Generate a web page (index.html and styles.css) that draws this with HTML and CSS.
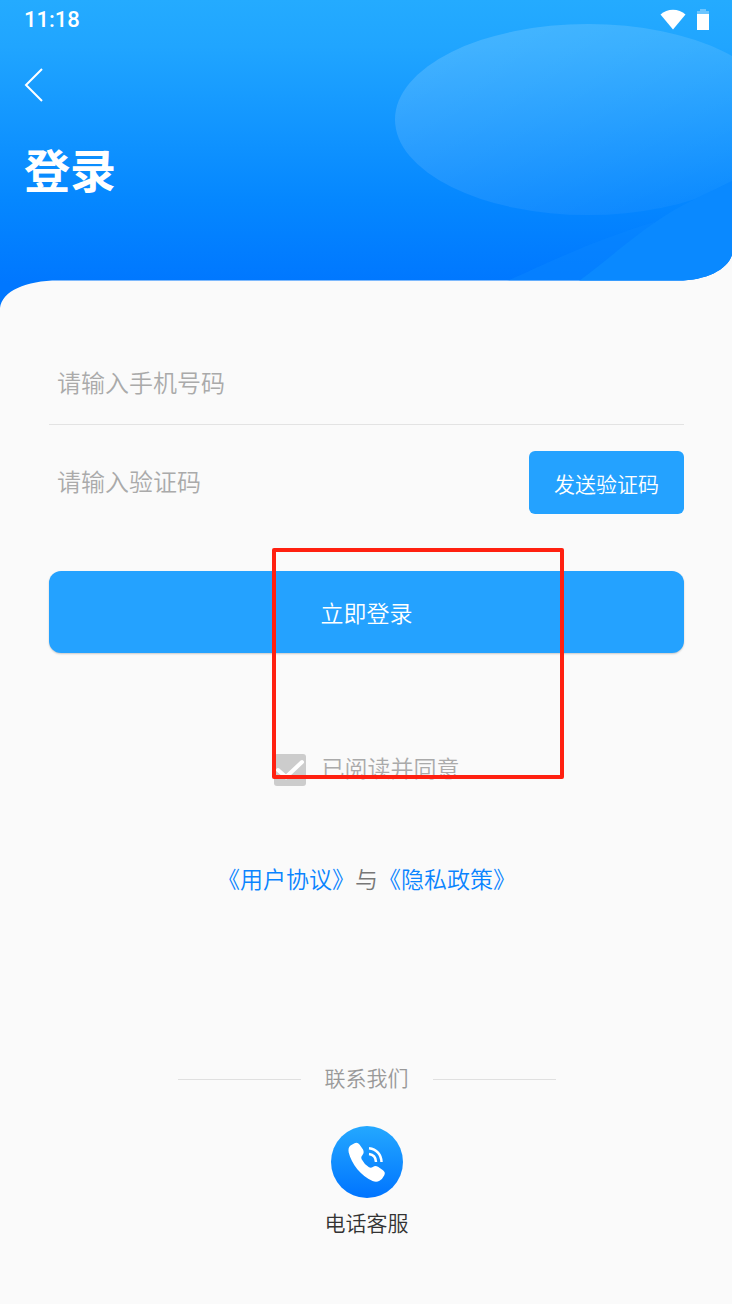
FILE: index.html
```html
<!DOCTYPE html>
<html lang="zh-CN">
<head>
    <meta charset="UTF-8">
    <meta name="viewport" content="width=device-width, initial-scale=1.0">
    <title>登录</title>
    <link rel="stylesheet" href="styles.css">
</head>
<body>
    <header class="header">
        <svg class="header-bg" viewBox="0 0 732 308" preserveAspectRatio="none" aria-hidden="true">
            <defs>
                <linearGradient id="sky" x1="0" y1="0" x2="0" y2="1">
                    <stop offset="0" stop-color="#24abff"/>
                    <stop offset="0.15" stop-color="#20a5ff"/>
                    <stop offset="0.65" stop-color="#0587ff"/>
                    <stop offset="0.92" stop-color="#0077ff"/>
                    <stop offset="1" stop-color="#0077ff"/>
                </linearGradient>
                <linearGradient id="shine" x1="0.1" y1="0.2" x2="0.75" y2="1">
                    <stop offset="0" stop-color="#fff" stop-opacity="0.15"/>
                    <stop offset="1" stop-color="#fff" stop-opacity="0.03"/>
                </linearGradient>
                <clipPath id="shape">
                    <path d="M0 0H732V255C727 270 706 280.500 678 280.500H58C26 280.500 2 291 0 308Z"/>
                </clipPath>
            </defs>
            <g clip-path="url(#shape)">
                <rect width="732" height="308" fill="url(#sky)"/>
                <ellipse cx="588" cy="119.500" rx="193" ry="95.500" fill="url(#shine)"/>
                <path d="M507 281C545 264 592 241 654 222L700 281Z" fill="#0a87ff" fill-opacity="0.45"/>
                <path d="M579 281C610 258 636 234 663 217C686 202 710 192 732 181V281Z" fill="#0a89ff"/>
            </g>
        </svg>
        <div class="status-bar">
            <span class="time">11:18</span>
            <span class="status-icons">
                <svg width="26" height="21" viewBox="0 0 26 21" aria-hidden="true">
                    <path d="M0.500 5.500C7-1 19-1 25.500 5.500L13 20.500Z" fill="#fff"/>
                </svg>
                <svg width="12" height="21" viewBox="0 0 12 21" aria-hidden="true">
                    <path d="M3 0H9V2H12V6H0V2H3Z" fill="#6cc5ff"/>
                    <path d="M0 5H12V21H0Z" fill="#fff"/>
                </svg>
            </span>
        </div>
        <button class="back" type="button" aria-label="返回">
            <svg width="20" height="34" viewBox="0 0 20 34" aria-hidden="true">
                <path d="M18 1L2 17L18 33" fill="none" stroke="#fff" stroke-width="2"/>
            </svg>
        </button>
        <h1 class="title">登录</h1>
    </header>

    <main class="content">
        <form class="login-form">
            <input class="field phone" type="tel" placeholder="请输入手机号码" aria-label="手机号码">
            <div class="code-row">
                <input class="field" type="text" placeholder="请输入验证码" aria-label="验证码">
                <button class="send" type="button">发送验证码</button>
            </div>
            <button class="submit" type="button">立即登录</button>
            <div class="agree">
                <input type="checkbox" id="agree" checked>
                <label for="agree">已阅读并同意</label>
            </div>
            <p class="terms"><a href="#">《用户协议》</a>与<a href="#">《隐私政策》</a></p>
            <div class="highlight"></div>
        </form>

        <section class="contact">
            <h2 class="contact-title">联系我们</h2>
            <a class="service" href="#">
                <svg width="72" height="72" viewBox="0 0 72 72" aria-hidden="true">
                    <defs>
                        <linearGradient id="call" x1="0" y1="0" x2="0" y2="1">
                            <stop offset="0" stop-color="#24a8ff"/>
                            <stop offset="1" stop-color="#0074ff"/>
                        </linearGradient>
                    </defs>
                    <circle cx="36" cy="36" r="36" fill="url(#call)"/>
                    <path d="M19.500 19.500L23.500 17.200Q26.500 15.800 28.500 18.500L32 23.500Q33.500 26.500 31.500 29Q29.500 31 30.500 33Q33 38 38 41.300Q40 42.300 41.800 41Q44.200 39 47 40.700L52 44.300Q54.800 46.500 53.300 49.200Q51.500 53 48.500 54.800Q45.500 56.600 41.500 55C30 50 20.500 38 17.700 26.500Q16.800 21.500 19.500 19.500Z" fill="#fff"/>
                    <path d="M38 22.200C45.500 23 50.300 28.500 50.500 36M38 28C42.500 28.500 44.800 31.500 45 36" fill="none" stroke="#fff" stroke-width="2.500"/>
                </svg>
                <span>电话客服</span>
            </a>
        </section>
    </main>
</body>
</html>
```
FILE: styles.css
```css
* {
    box-sizing: border-box;
}

body {
    margin: 0;
    background-color: #fafafa;
    color: #777;
    font-family: Roboto, "Noto Sans CJK SC", sans-serif;
    font-size: 23px;
    font-weight: 350;
    line-height: 32px;
}

a {
    color: #0a84ff;
    text-decoration: none;
}

button,
input {
    margin: 0;
    padding: 0;
    border: none;
    font-family: inherit;
    font-weight: inherit;
}

button {
    color: #fff;
    cursor: pointer;
}

.header {
    position: relative;
    height: 308px;
    padding: 0 23px 0 24px;
    color: #fff;
}

.header-bg {
    position: absolute;
    top: 0;
    left: 0;
    z-index: -1;
    width: 100%;
    height: 100%;
}

.status-bar {
    display: flex;
    align-items: center;
    justify-content: space-between;
    height: 40px;
}

.time {
    font-size: 22px;
    font-weight: 500;
}

.status-icons {
    display: flex;
    gap: 11px;
    padding-bottom: 2px;
}

.back {
    display: flex;
    margin-top: 28px;
    background: none;
}

.title {
    margin: 36px 0 0;
    font-size: 46px;
    font-weight: bold;
    line-height: 68px;
}

.content {
    padding: 36px 48px 64px 49px;
}

.login-form {
    position: relative;
}

.field {
    display: block;
    width: 100%;
    min-width: 0;
    padding: 0 8px;
    background: none;
    color: #333;
    font-size: 24px;
    outline: none;
}

.field::placeholder {
    color: #aaa;
}

.phone {
    height: 81px;
    border-bottom: 1px solid #e3e3e3;
}

.code-row {
    display: flex;
    margin-top: 26px;
}

.send {
    flex: none;
    padding: 0 25px;
    height: 63px;
    border-radius: 6px;
    background-color: #24a2ff;
    font-size: 21px;
}

.submit {
    display: block;
    width: 100%;
    height: 82px;
    margin-top: 57px;
    border-radius: 12px;
    background-color: #24a2ff;
    box-shadow: 0 1px 2px rgba(0, 0, 0, 0.2);
    font-size: 23px;
}

.agree {
    display: flex;
    align-items: center;
    justify-content: center;
    gap: 16px;
    margin-top: 101px;
    color: #aaa;
}

.agree input {
    appearance: none;
    width: 32px;
    height: 32px;
    border-radius: 3px;
    background-color: #ccc;
}

.agree input:checked {
    background-image: url("data:image/svg+xml,%3Csvg xmlns='http://www.w3.org/2000/svg' viewBox='0 0 32 32'%3E%3Cpath d='M4 16L12 23L28 8' fill='none' stroke='white' stroke-width='4' stroke-linecap='round'/%3E%3C/svg%3E");
}

.terms {
    margin: 79px 0 0;
    text-align: center;
}

/* red frame over the login button and the agreement */
.highlight {
    position: absolute;
    top: 204px;
    left: calc(50% - 95px);
    width: 292px;
    height: 231px;
    border: 4px solid #ff2010;
    border-radius: 2px;
    pointer-events: none;
}

.contact {
    margin-top: 166px;
    font-size: 21px;
}

.contact-title {
    display: flex;
    align-items: center;
    justify-content: center;
    gap: 24px;
    margin: 0;
    color: #999;
    font-size: 21px;
    font-weight: inherit;
}

.contact-title::before,
.contact-title::after {
    content: "";
    width: 123px;
    height: 1px;
    background-color: #e0e0e0;
}

.service {
    display: flex;
    flex-direction: column;
    align-items: center;
    gap: 10px;
    margin-top: 31px;
    color: #333;
}
```
